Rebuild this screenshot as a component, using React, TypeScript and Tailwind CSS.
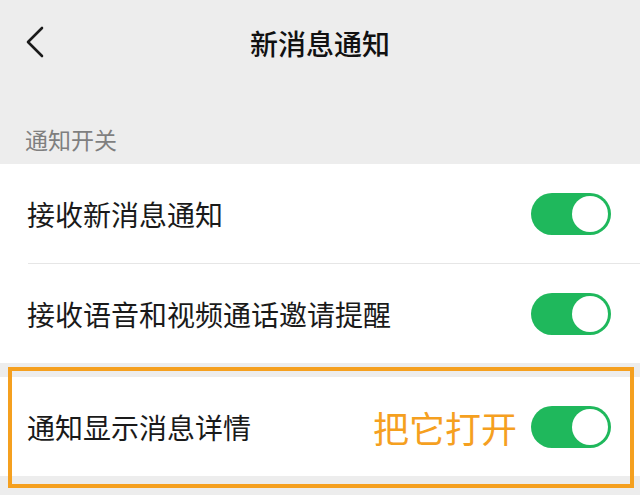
import React from 'react'

const font = { fontFamily: '"Noto Sans CJK SC", "Noto Sans", sans-serif' }

function Toggle() {
  return (
    <div className="relative h-[42px] w-[80px] shrink-0 rounded-full bg-[#1fb85c]">
      <div className="absolute right-[3px] top-[3px] h-[36px] w-[36px] rounded-full bg-white" />
    </div>
  )
}

function Row({ label, extra, divider }: { label: string; extra?: React.ReactNode; divider?: boolean }) {
  return (
    <div className="relative bg-white">
      <div className="flex h-[99px] items-center justify-between pl-[27px] pr-[29px]">
        <span className="text-[28px] leading-none text-[#1a1a1a]">{label}</span>
        <div className="flex items-center gap-[14px]">
          {extra}
          <Toggle />
        </div>
      </div>
      {divider && <div className="ml-[28px] h-px bg-[#e6e6e6]" />}
    </div>
  )
}

export default function App() {
  return (
    <div className="relative h-[495px] w-[640px] overflow-hidden bg-[#ededed]" style={font}>
      <header className="relative flex h-[86px] items-center justify-center">
        <svg
          className="absolute left-[24px] top-[26px]"
          width="22"
          height="32"
          viewBox="0 0 22 32"
          fill="none"
          stroke="#1a1a1a"
          strokeWidth="2.6"
          strokeLinecap="round"
          strokeLinejoin="round"
        >
          <path d="M18 2 L4 16 L18 30" />
        </svg>
        <h1 className="text-[28px] font-medium leading-none text-[#111]">新消息通知</h1>
      </header>

      <div className="pl-[25px] pt-[41px] pb-[13px]">
        <p className="text-[23px] leading-[24px] text-[#7f7f7f]">通知开关</p>
      </div>

      <Row label="接收新消息通知" divider />
      <Row label="接收语音和视频通话邀请提醒" />

      <div className="h-[14px]" />
      <Row
        label="通知显示消息详情"
        extra={<span className="text-[36px] leading-none text-[#f5a01f]">把它打开</span>}
      />

      <div className="pointer-events-none absolute left-[8px] top-[367px] h-[121px] w-[626px] border-[4px] border-[#f5a01f]" />
    </div>
  )
}
